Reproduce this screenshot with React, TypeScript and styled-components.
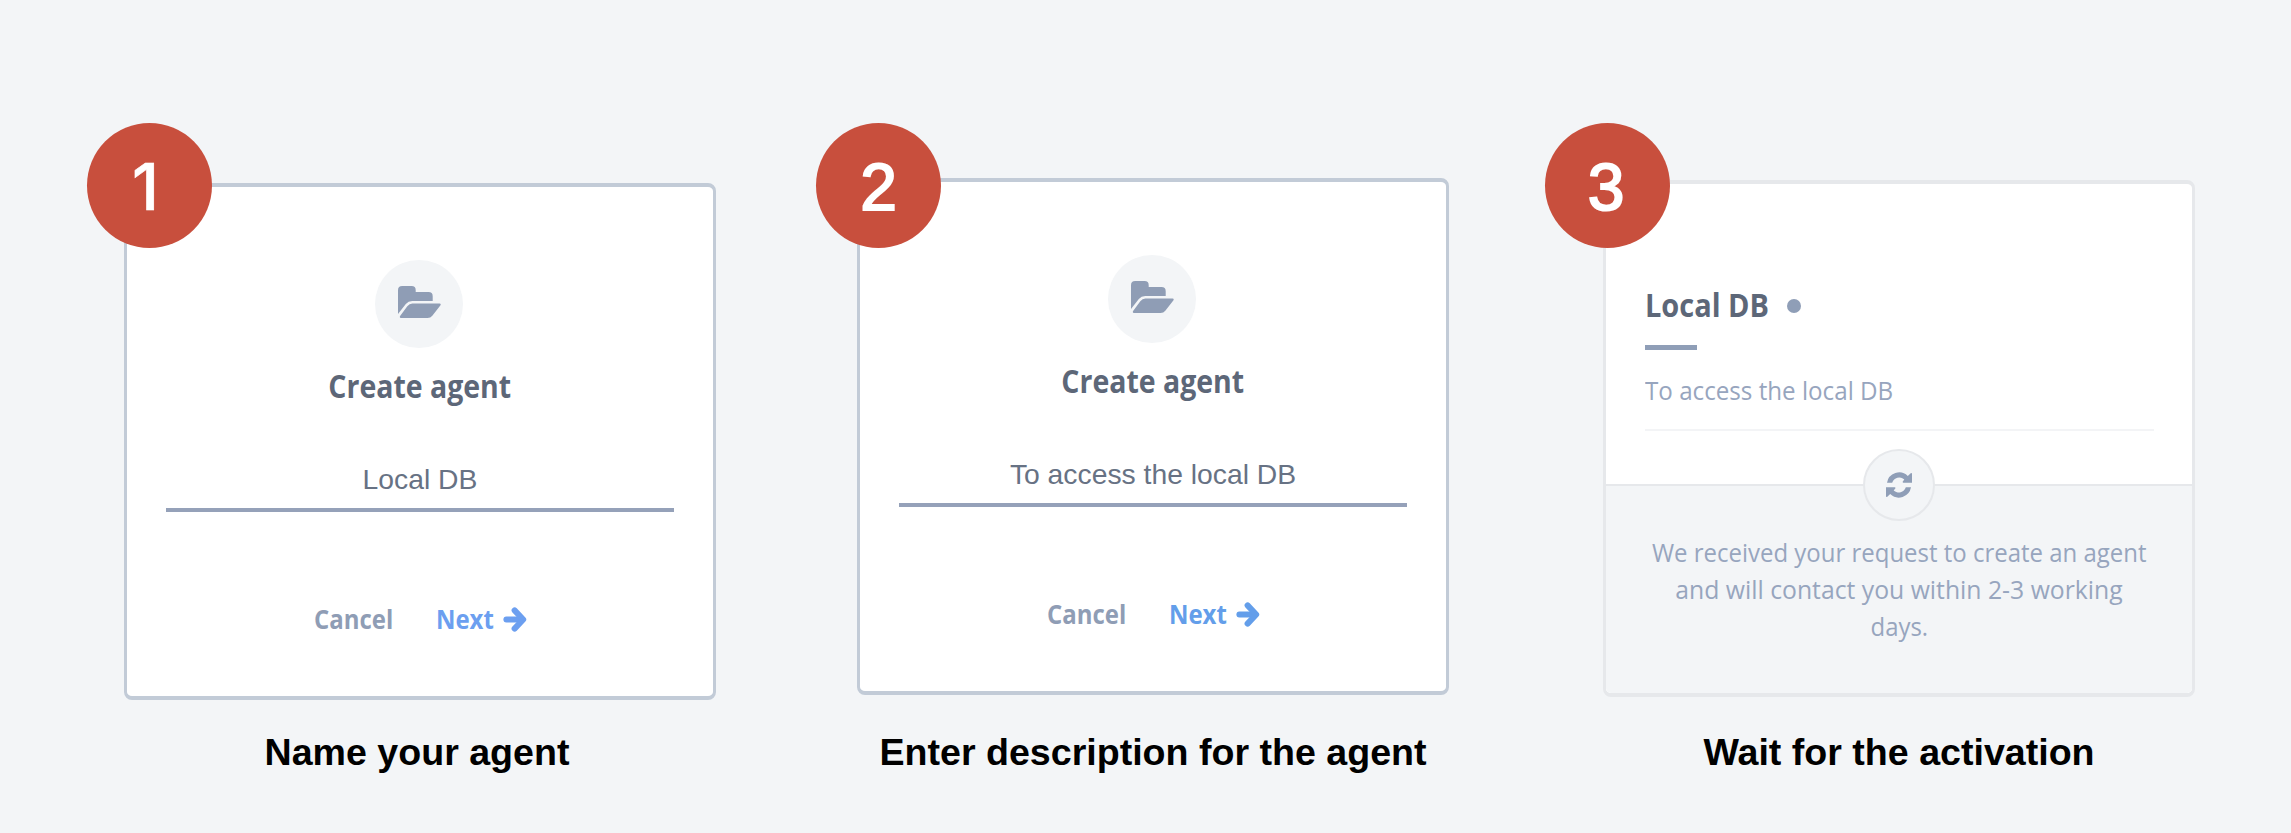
import React from "react";
import styled, { createGlobalStyle } from "styled-components";

const GlobalStyle = createGlobalStyle`
  body { margin: 0; background: #f3f5f7; }
  * { box-sizing: border-box; }
`;

const human = `"Open Sans", "Noto Sans", sans-serif`;
const grotesk = `"Liberation Sans", Arial, sans-serif`;

const Page = styled.main`
  width: 2291px;
  height: 833px;
  display: flex;
  align-items: flex-start;
  padding-left: 124px;
  background: #f3f5f7;
  overflow: hidden;
`;

const Step = styled.section<{ $before?: number }>`
  position: relative;
  flex: none;
  width: 592px;
  margin-left: ${(p) => p.$before ?? 0}px;
  display: flex;
  flex-direction: column;
`;

const CardArea = styled.div<{ $top: number }>`
  height: 730px;
  padding-top: ${(p) => p.$top}px;
`;

const Badge = styled.div<{ $left: number; $nudge?: number }>`
  position: absolute;
  top: 123px;
  left: ${(p) => p.$left}px;
  width: 125px;
  height: 125px;
  border-radius: 50%;
  padding-right: ${(p) => p.$nudge ?? 0}px;
  background: #c84f3d;
  color: #fff;
  font: 400 66px/129px ${grotesk};
  -webkit-text-stroke: 2px #fff;
  text-align: center;
`;

/* Inter draws its "1" without a foot */
const FirstBadge = styled(Badge)`
  font: 500 65px/128px Inter, ${grotesk};
  -webkit-text-stroke: 0.6px #fff;
`;

const Card = styled.div<{ $muted?: boolean }>`
  height: 517px;
  display: flex;
  flex-direction: column;
  border: solid ${(p) => (p.$muted ? "#e6e8eb" : "#c2cbd7")};
  border-width: 4px 3px;
  border-radius: 8px;
  background: #fff;
`;

const FormCard = styled(Card)`
  align-items: center;
  padding: 73px 39px 0;
`;

const IconDisc = styled.div`
  width: 88px;
  height: 88px;
  margin-right: 2px;
  border-radius: 50%;
  background: #f3f5f7;
  padding: 26px 0 0 23px;
`;

const Title = styled.h2<{ $origin?: string; $scale: number }>`
  margin: 0;
  font: 700 32px/40px ${human};
  color: #5d6778;
  white-space: nowrap;
  transform: scaleX(${(p) => p.$scale});
  transform-origin: ${(p) => p.$origin ?? "center"};
`;

const FormTitle = styled(Title)`
  margin-top: 18px;
`;

const Field = styled.div`
  width: 508px;
  height: 53px;
  margin-top: 53px;
  border-bottom: 4px solid #95a1b9;
  color: #677284;
  font: 400 28.3px/40px ${grotesk};
  text-align: center;
`;

const Actions = styled.div`
  display: flex;
  justify-content: center;
  align-items: center;
  margin-top: 89px;
  height: 36px;
`;

const Action = styled.span<{ $color: string; $width: number }>`
  width: ${(p) => p.$width}px;
  color: ${(p) => p.$color};
  font: 700 27px/36px ${human};
  white-space: nowrap;
  transform: scaleX(0.887);
  transform-origin: left;
`;

const Caption = styled.p<{ $shift?: number }>`
  margin: 0 -40px;
  padding-right: ${(p) => p.$shift ?? 0}px;
  color: #000;
  font: 700 37.6px/44px ${grotesk};
  text-align: center;
  white-space: nowrap;
`;

const Summary = styled.div`
  height: 300px;
  padding: 101px 38px 0 39px;
`;

const NameRow = styled.div`
  display: flex;
  align-items: center;
  height: 40px;
`;

const NameSlot = styled.div`
  width: 142px;
`;

const Dot = styled.span`
  width: 14px;
  height: 14px;
  border-radius: 50%;
  margin-top: 2px;
  background: #8f9eb7;
`;

const Accent = styled.div`
  width: 52px;
  height: 5px;
  margin-top: 20px;
  background: #8f9eb7;
`;

const Description = styled.p`
  margin: 22px 0 0;
  border-bottom: 2px solid #f3f4f6;
  height: 59px;
`;

const Soft = styled.span<{ $scale: number; $origin?: string }>`
  display: block;
  color: #97a5be;
  font: 400 26px/37px ${human};
  white-space: nowrap;
  transform: scaleX(${(p) => p.$scale});
  transform-origin: ${(p) => p.$origin ?? "center"};
`;

const Notice = styled.div`
  position: relative;
  flex: 1;
  border-top: 2px solid #e6e8eb;
  border-radius: 0 0 5px 5px;
  background: #f3f5f7;
  padding-top: 48px;
  display: flex;
  flex-direction: column;
  align-items: center;
`;

const SyncDisc = styled.div`
  position: absolute;
  top: -37px;
  left: 257px;
  width: 72px;
  height: 72px;
  border: 2px solid #e6e8eb;
  border-radius: 50%;
  background: #f3f5f7;
  display: flex;
  align-items: center;
  justify-content: center;
`;

const FolderIcon = () => (
  <svg width="43" height="32" viewBox="0 0 43 32" fill="#8f9db5" display="block">
    <path d="M0 4.2Q0 0 4.2 0H13.6Q17.7 0 17.7 4.2V6H30.5Q34.7 6 34.7 10.2V15H14.2Q10.3 15 7.8 18L0 28Z" />
    <path d="M2.1 30L9.3 20.3Q11.4 17.6 14.4 17.6H41.6Q43.4 17.7 42.3 19.5L34.3 29.7Q32.5 32 29.6 32H3Q1.2 31.8 2.1 30Z" />
  </svg>
);

const ArrowIcon = ({ color }: { color: string }) => (
  <svg width="24" height="25" viewBox="0 0 24 25" fill={color} stroke={color} strokeWidth="6" strokeLinecap="round" strokeLinejoin="round">
    <path d="M3.4 12.5H17" />
    <path d="M11.6 3.4L20.2 12.5L11.6 21.6L16.4 12.5Z" strokeWidth="0" />
    <path d="M11.6 3.4L20.2 12.5L11.6 21.6" fill="none" />
  </svg>
);

const SyncIcon = () => (
  <svg width="26" height="26" viewBox="0 0 26 26" fill="#8f9eb7">
    <path id="half" d="M1 10.7A12.4 12.4 0 0 1 21.8 3.9L24.7 1.3Q26 .6 26 2V10.7H17.2Q16 10.4 17 9.2L18.3 7.6A7.4 7.4 0 0 0 6.2 10.7Z" />
    <use href="#half" transform="rotate(180 13 13)" />
  </svg>
);

type FormProps = { value: string; link: string };

const AgentForm = ({ value, link }: FormProps) => (
  <FormCard>
    <IconDisc><FolderIcon /></IconDisc>
    <FormTitle $scale={0.89}>Create agent</FormTitle>
    <Field>{value}</Field>
    <Actions>
      <Action $color="#8f9db5" $width={122}>Cancel</Action>
      <Action $color={link} $width={67}>Next</Action>
      <ArrowIcon color={link} />
    </Actions>
  </FormCard>
);

export default function App() {
  return (
    <>
      <GlobalStyle />
      <Page>
        <Step>
          <CardArea $top={183}>
            <AgentForm value="Local DB" link="#6c9ff0" />
          </CardArea>
          <Caption $shift={6}>Name your agent</Caption>
          <FirstBadge $left={-37} $nudge={8}>1</FirstBadge>
        </Step>
        <Step $before={141}>
          <CardArea $top={178}>
            <AgentForm value="To access the local DB" link="#639eea" />
          </CardArea>
          <Caption>Enter description for the agent</Caption>
          <Badge $left={-41}>2</Badge>
        </Step>
        <Step $before={154}>
          <CardArea $top={180}>
            <Card $muted>
              <Summary>
                <NameRow>
                  <NameSlot><Title $scale={0.905} $origin="left">Local DB</Title></NameSlot>
                  <Dot />
                </NameRow>
                <Accent />
                <Description><Soft $scale={0.93} $origin="left">To access the local DB</Soft></Description>
              </Summary>
              <Notice>
                <SyncDisc><SyncIcon /></SyncDisc>
                <Soft $scale={0.922}>We received your request to create an agent</Soft>
                <Soft $scale={0.952}>and will contact you within 2-3 working</Soft>
                <Soft $scale={0.92}>days.</Soft>
              </Notice>
            </Card>
          </CardArea>
          <Caption>Wait for the activation</Caption>
          <Badge $left={-58} $nudge={3}>3</Badge>
        </Step>
      </Page>
    </>
  );
}
